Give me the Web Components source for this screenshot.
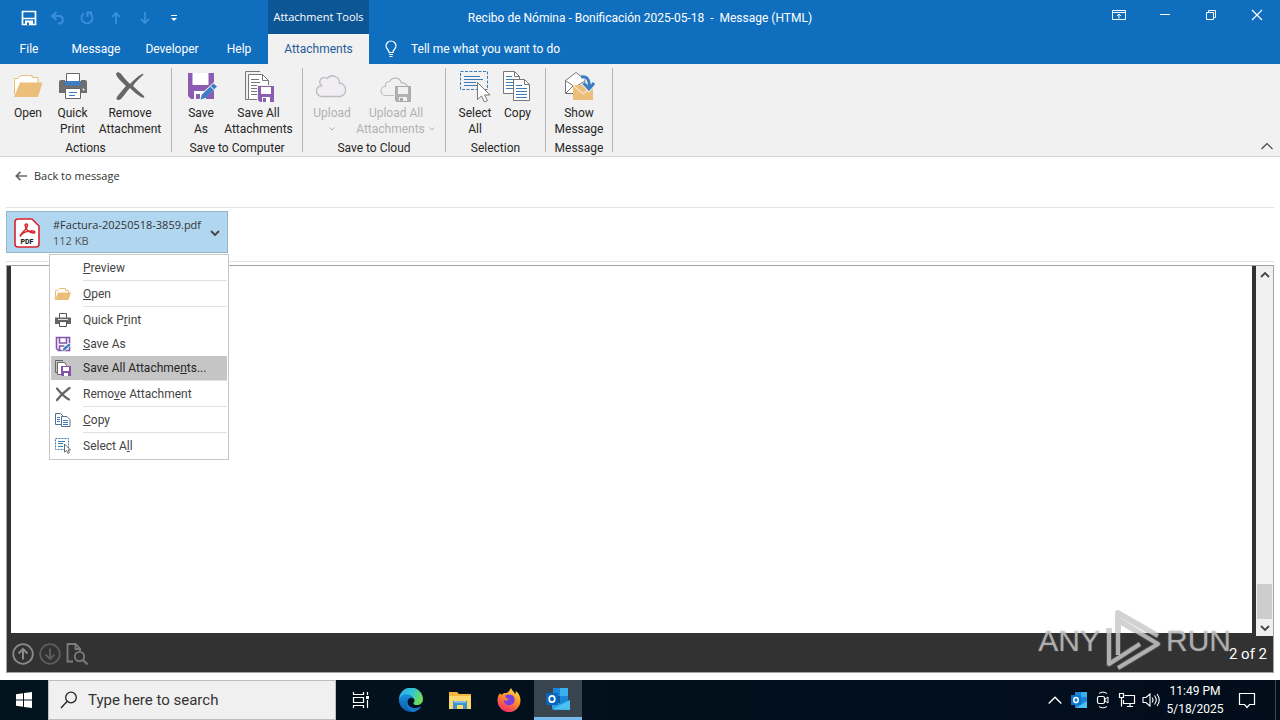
<!DOCTYPE html>
<html lang="en">
<head>
<meta charset="utf-8">
<meta name="viewport" content="width=device-width, initial-scale=1">
<title>Recibo de Nómina - Bonificación 2025-05-18 - Message (HTML)</title>
<style>
  html, body { margin: 0; height: 100%; }
  body {
    display: flex; flex-direction: column; min-height: 100vh;
    font: 12px/16px Roboto, "Noto Sans", sans-serif;
    color: #262626; background: #fff;
    --small: 11px/16px "Open Sans", "Noto Sans", sans-serif;
  }
</style>
</head>
<body>
<message-window></message-window>
<task-bar></task-bar>

<script>
const ICONS = {
  save: ['0 0 16 16', '<path d="M1.500 1.500h13v13h-13z M2 8.500h12" fill="none" stroke="#fff" stroke-width="1.700"/><path d="M4 10.500h8V15H4z" fill="#fff"/><path d="M6 12.500h2V15H6z" fill="#106ebe"/>'],
  undo: ['0 0 16 16', '<path d="M6.500 2L2 6l4.500 4M2.500 6H10a3.500 3.800 0 0 1 0 7.500H8" fill="none" stroke="#3a8fd8" stroke-width="1.800"/>'],
  redo: ['0 0 16 16', '<path d="M11 3.200A5.500 5.500 0 1 1 5 3.200M8.500 7V2.500h4.500" fill="none" stroke="#3a8fd8" stroke-width="1.800"/>'],
  up: ['0 0 16 16', '<path d="M8 14V3M4 7l4-4 4 4" fill="none" stroke="#3a8fd8" stroke-width="1.800"/>'],
  down: ['0 0 16 16', '<path d="M8 2v11M4 9l4 4 4-4" fill="none" stroke="#3a8fd8" stroke-width="1.800"/>'],
  more: ['0 0 16 16', '<path d="M5 5.500h6" stroke="#fff"/><path d="M5 8h6l-3 3z" fill="#fff"/>'],
  bulb: ['0 0 16 20', '<path d="M6 13.500c0-3-3-3.500-3-6.500a5 5 0 0 1 10 0c0 3-3 3.500-3 6.500zM6 15.500h4M6.500 17.500h3" fill="none" stroke="#fff" stroke-width="1.200"/>'],
  ribbonopts: ['0 0 14 12', '<path d="M.5 1.500h13v9H.5zM.5 3.500h13M7 9.500V5M5 7l2-2 2 2" fill="none" stroke="#fff"/>'],
  min: ['0 0 12 12', '<path d="M1 5.500h10" stroke="#fff"/>'],
  restore: ['0 0 12 12', '<path d="M1.500 3.500h7v7h-7zM3.500 3.500v-2h7v7h-2" fill="none" stroke="#fff"/>'],
  close: ['0 0 12 12', '<path d="M1 1l10 10M11 1L1 11" stroke="#fff" stroke-width="1.200"/>'],
  folder: ['0 0 32 32', '<path d="M2.500 24V8.500h3L9 5.500h11v2h6V14" fill="#fff" stroke="#e8bd78"/><path d="M2 27L8 12.500h22.500L26 27z" fill="#ebbf79"/>'],
  printer: ['0 0 32 32', '<path d="M9.500 14V3.500h13V14" fill="#fff" stroke="#666"/><path d="M4 10h4v4h16v-4h4a2 2 0 0 1 2 2v11H2V12a2 2 0 0 1 2-2z" fill="#6e6e6e"/><path d="M8 11h16v4.500H8z" fill="#3c7dc4"/><circle cx="26.500" cy="19.500" r="1" fill="#fff"/><path d="M8.500 18.500h15v10h-15z" fill="#fff" stroke="#666"/><path d="M12 22.500h8M12 25.500h6" stroke="#3c7dc4"/>'],
  cross: ['0 0 32 32', '<path d="M2 4c1-3 4-2 6 1 2 3 5 6 8 9 4-4 8-8 12-10 2-1 2 1 0 2-3 3-7 6-9 10 4 4 8 7 11 10 1 2-1 2-3 1-5-3-8-6-11-9-4 4-6 8-9 11-2 2-6 1-4-2 3-4 6-8 9-11C8 12 3 8 2 4z" fill="#666"/>'],
  saveas: ['0 0 32 32', '<path d="M3 3h26v26H6l-3-3z" fill="#8c5cb3"/><path d="M7.500 3h16v12h-16zM9 21h12v8H9z" fill="#fff"/><path d="M11 24h4v5h-4z" fill="#8c5cb3"/><path d="M14 31l2-7 13-12 4 4-13 12z" fill="#f1f1f1"/><path d="M15.500 29.500l1.500-5L28.500 13.500l3.500 3L20.500 28z" fill="#3c7dc4"/><path d="M25.500 16.500l3.500 3" stroke="#fff"/>'],
  saveall: ['0 0 32 32', '<path d="M5 29.500H2.500v-28H17" fill="none" stroke="#777"/><path d="M5.500 4.500h14l6 6V29.500h-20z" fill="#fff" stroke="#777"/><path d="M19.500 4.500v6h6M8 9.500h8M8 12.500h9M8 15.500h8M8 18.500h7M8 21.500h7M8 24.500h7" fill="none" stroke="#777"/><path d="M14 15h18v17H14z" fill="#f1f1f1"/><path d="M15 16h16v16H17l-2-2z" fill="#8c5cb3"/><path d="M18 17h10v7H18zM19 27h8v5h-8z" fill="#fff"/><path d="M20 28h3v4h-3z" fill="#8c5cb3"/>'],
  cloud: ['0 0 32 32', '<path d="M6.500 26.500a5.500 5.500 0 0 1-1-11 4 4 0 0 1 5.500-7 7 7 0 0 1 12.500 4.500 6.900 6.900 0 0 1 1 13.500z" fill="#f1eef3" stroke="#bdb9bf" stroke-width="1.300"/>'],
  cloudall: ['0 0 32 32', '<path d="M5.500 25.500a4.500 4.500 0 0 1 0-9 4 4 0 0 1 4-5 6.500 6.500 0 0 1 12 1.500 5 5 0 0 1 6 4" fill="none" stroke="#bcbcbc" stroke-width="1.200"/><path d="M5 25.500h9" stroke="#bcbcbc"/><path d="M15.500 16.500h15v15h-14l-1-1z" fill="#b2b0b3" stroke="#a9a9a9"/><path d="M18 17h10v7H18zM19 27h8v4h-8z" fill="#f1f1f1"/><path d="M20 28h3v3h-3z" fill="#a9a9a9"/>'],
  selectall: ['0 0 32 32', '<path d="M1.500 1.500h27v18h-27z" fill="none" stroke="#3d7ab8" stroke-dasharray="3 1.500"/><path d="M5 6.500h16M5 9.500h19M5 12.500h12M5 15.500h13" stroke="#3d7ab8"/><path d="M18.500 12.500v17l4-3.500 3 6 3-1.500-3-5.500h5.500z" fill="#fff" stroke="#777"/>'],
  copy: ['0 0 32 32', '<path d="M1.500 1.500h11l5 5v17h-16z" fill="#fff" stroke="#777"/><path d="M12.500 1.500v5h5" fill="none" stroke="#777"/><path d="M4 6.500h6M4 9.500h9M4 12.500h9M4 15.500h7M4 18.500h7" fill="none" stroke="#3d7ab8"/><path d="M11.500 9.500h11l5 5v16h-16z" fill="#fff" stroke="#777"/><path d="M22.500 9.500v5h5" fill="none" stroke="#777"/><path d="M14 15.500h6M14 18.500h11M14 21.500h11M14 24.500h11M14 27.500h11" stroke="#3d7ab8"/>'],
  showmsg: ['0 0 32 32', '<path d="M2.500 23.500V10.500L13 2.500l9 7v14z" fill="#fff" stroke="#777"/><path d="M2.500 10.500L12 17l10-6M3 23l7-7" fill="none" stroke="#777"/><path d="M10 15h20v15H10z" fill="#ebbf79"/><path d="M10 15l10 9 10-9" fill="none" stroke="#f8e3c2" stroke-width="1.300"/><path d="M18 7c7-1 9 4 8 11M20.500 13l5.500 6 5-6" fill="none" stroke="#f1f1f1" stroke-width="5"/><path d="M18 7c7-1 9 4 8 11M20.500 13l5.500 6 5-6" fill="none" stroke="#3c7dc4" stroke-width="3"/>'],
  chev: ['0 0 8 8', '<path d="M1.500 2.500L4 5l2.500-2.500" fill="none" stroke="currentColor"/>'],
  chevdown: ['0 0 12 12', '<path d="M2 4l4 4 4-4" fill="none" stroke="currentColor" stroke-width="1.800"/>'],
  chevup: ['0 0 12 12', '<path d="M2 8l4-4 4 4" fill="none" stroke="currentColor" stroke-width="1.800"/>'],
  thinup: ['0 0 14 12', '<path d="M1.500 9L7 3.500 12.500 9" fill="none" stroke="currentColor" stroke-width="1.200"/>'],
  back: ['0 0 12 12', '<path d="M1 6h11M5.500 1.800L1.300 6l4.200 4.200" fill="none" stroke="#666" stroke-width="1.700"/>'],
  pdf: ['0 0 26 30', '<path d="M4 1h14l7 7v18a3 3 0 0 1-3 3H4a3 3 0 0 1-3-3V4a3 3 0 0 1 3-3z" fill="#fff" stroke="#d9252c" stroke-width="1.600"/><path d="M6.500 17.500c1-3 6.500-6 7-10 0-2-2.500-2-2.300 0 .5 4 4 7 8.300 7.500 2 0 1.500-2-.5-2-4-.3-9 1-11.500 3.500-1.500 1.500-1 2-1 1z" fill="none" stroke="#d9252c" stroke-width="1.600"/><text x="13" y="26" font-family="Roboto, sans-serif" font-size="7" font-weight="800" text-anchor="middle" fill="#222">PDF</text>'],
  mfolder: ['0 0 16 16', '<path d="M.5 13V4.500h2l2-2h6v2h3V7" fill="#fff" stroke="#e8bd78"/><path d="M0 14l3-7.500h13L13.500 14z" fill="#ebbf79"/>'],
  mprinter: ['0 0 16 16', '<path d="M4.500 6V1.500h7V6" fill="#fff" stroke="#555"/><path d="M0 5.500h16V12H0z" fill="#666"/><path d="M4.500 9.500h7v5h-7z" fill="#fff" stroke="#555"/><path d="M3 7.500h10" stroke="#ddd"/>'],
  msaveas: ['0 0 16 16', '<path d="M1.500 1.500h13v13h-11l-2-2zM4.500 2v5h7V2M4.500 14v-4h5" fill="#fff" stroke="#8453ac" stroke-width="1.600"/><path d="M7 16l1-4 6-5 2 2-6 5.500z" fill="#3c7dc4" stroke="#fff" stroke-width=".7"/>'],
  msaveall: ['0 0 16 16', '<path d="M2 12.500H.5V.5H8" fill="none" stroke="#666"/><path d="M2.500 2.500h7l2 3v9h-9z" fill="#fff" stroke="#666"/><path d="M6 6h10v10H7l-1-1z" fill="#8453ac"/><path d="M8 7h6v4H8zM9 13h4v3H9z" fill="#fff"/>'],
  mcross: ['0 0 16 16', '<path d="M2 2.500c4 5 8 9 12 11M14.500 2C9 6 5 10 2 14" fill="none" stroke="#666" stroke-width="2.200" stroke-linecap="round"/>'],
  mcopy: ['0 0 16 16', '<path d="M.5 1.500h5l3 3v8h-8z" fill="#fff" stroke="#58708a"/><path d="M2 5.500h3M2 7.500h3M2 9.500h3" stroke="#3d7ab8"/><path d="M6.500 4.500h5.500l3 3v7H6.500z" fill="#fff" stroke="#58708a"/><path d="M8 8.500h5M8 10.500h5M8 12.500h5" stroke="#3d7ab8"/>'],
  mselect: ['0 0 16 16', '<path d="M.5 .5h13v11H.5z" fill="none" stroke="#3d7ab8" stroke-dasharray="2 1"/><path d="M3 3.500h7M3 5.500h5M3 8.500h5" stroke="#3d7ab8"/><path d="M9.500 6v8l2-1.500 1.500 3 1.500-1-1.500-2.500h2.500z" fill="#fff" stroke="#666"/>'],
  circleup: ['0 0 22 22', '<circle cx="11" cy="11" r="9.800" fill="none" stroke="#8a8a8a" stroke-width="1.800"/><path d="M11 16.500V6M6.500 10.500L11 6l4.500 4.500" fill="none" stroke="#8a8a8a" stroke-width="2"/>'],
  circledown: ['0 0 22 22', '<circle cx="11" cy="11" r="9.800" fill="none" stroke="#5c5c5c" stroke-width="1.800"/><path d="M11 5.500V16M6.500 11.500L11 16l4.500-4.500" fill="none" stroke="#5c5c5c" stroke-width="2"/>'],
  docsearch: ['0 0 22 22', '<path d="M7 18.500H1.500V1h8l4.500 4.500V8M9.500 1v5h5" fill="none" stroke="#7c7c7c" stroke-width="1.800"/><circle cx="13.500" cy="13.500" r="4.700" fill="none" stroke="#7c7c7c" stroke-width="1.800"/><path d="M17 17l4.500 4.500" stroke="#7c7c7c" stroke-width="2"/>'],
  windows: ['0 0 16 16', '<path d="M0 2.200L7 1.200v6.300H0zM8 1l8-1v7.500H8zM0 8.500h7v6.300L0 13.800zM8 8.500h8V16l-8-1.100z" fill="#fff"/>'],
  search: ['0 0 18 18', '<circle cx="11" cy="6.500" r="5.300" fill="none" stroke="#222" stroke-width="1.300"/><path d="M7 10.500L1 17" stroke="#222" stroke-width="1.300"/>'],
  taskview: ['0 0 18 16', '<path d="M1.500 0v2.500h10V0M1.500 16v-2.500h10V16M1.500 5.500h10v5h-10zM15.500 0v3M15.500 8v8" fill="none" stroke="#fff" stroke-width="1.200"/><path d="M14 4h3v3h-3z" fill="#fff"/>'],
  edge: ['0 0 24 24', '<defs><linearGradient id="e" x1="0" x2="1" y2=".4"><stop stop-color="#2aa3e6"/><stop offset=".55" stop-color="#31c6d8"/><stop offset="1" stop-color="#6ddc5a"/></linearGradient><linearGradient id="f" y1="0" y2="1" x2="0"><stop stop-color="#1a8fe0"/><stop offset="1" stop-color="#0c59a4"/></linearGradient></defs><path d="M0 12a12 12 0 0 1 24-1c0 4-3 6-6 6-2.500 0-4-1-3.500-2 2-2 1-6-3.500-6.500C6 8 2 9 0 12z" fill="url(#e)"/><path d="M0 12c1-4 5-6.500 9.500-5.500 3 .8 4.500 2 5 4-2.500-2-6 0-6 3.500 0 5 6 8 13.500 4.500-3 5-7.500 6-11 5.400A12 12 0 0 1 0 12z" fill="url(#f)"/><path d="M8.500 14c0 5 6 8 13.500 4.500-2 3.500-5 5-8 5.400C9 22.500 6 17 8.500 14z" fill="#1a76c9"/>'],
  explorer: ['0 0 22 19', '<path d="M0 1h8l2 2h12v15H0z" fill="#f2b83c"/><path d="M0 5h22v13H0z" fill="#fcd96f"/><path d="M4 10h14v8h-4v-4H8v4H4z" fill="#3d92d0"/><path d="M5 10h12v2H5z" fill="#7bbde6"/>'],
  firefox: ['0 0 24 24', '<defs><linearGradient id="g" x1=".8" x2=".3" y2="1"><stop stop-color="#ffe14a"/><stop offset=".45" stop-color="#ff9326"/><stop offset="1" stop-color="#f0296a"/></linearGradient></defs><path d="M3 5c0 1 1 1.500 2 1.500C7 4.500 8 5 9 5c2 0 3-2 5-5 1 3 3 3 4 6 1-1 1-2 .5-3C22 5 23.500 9 23.500 12.500a11.500 11.500 0 0 1-23 0C.5 9 1.500 7 3 5z" fill="url(#g)"/><path d="M8 8c2-2 7-2 9 1 1.500 3 .5 7-3 8-4 1-7.500-1.500-7-5 1 1 3 1 5-.5C10 11 9 10 8 8z" fill="#7a3fe0"/>'],
  outlook: ['0 0 24 22', '<path d="M7 0h15v16H7z" fill="#1a86d9"/><path d="M14 0h8v8h-8z" fill="#38b0ee"/><path d="M7 8h7v8H7z" fill="#0c5ca8"/><path d="M6 12l9 4 9-4v10H8a2 2 0 0 1-2-2z" fill="#2ba0e6"/><path d="M7 21l17-9v10z" fill="#4cc0f2"/><path d="M0 5h12v12H0z" fill="#0b65bd"/><ellipse cx="6" cy="11" rx="2.800" ry="3.200" fill="none" stroke="#fff" stroke-width="1.700"/>'],
  trayoutlook: ['0 0 16 16', '<path d="M4 0h12v16H4z" fill="#1a86d9"/><path d="M10 0h6v5h-6z" fill="#38b0ee"/><path d="M5 16l11-7v7z" fill="#4cc0f2"/><path d="M0 3h10v10H0z" fill="#0b74cf"/><ellipse cx="5" cy="8" rx="2.200" ry="2.600" fill="none" stroke="#fff" stroke-width="1.500"/>'],
  camera: ['0 0 14 18', '<path d="M3 2.500c2.500-1.800 5.500-1.800 8 0M3 15.500c2.500 1.800 5.500 1.800 8 0" fill="none" stroke="#fff"/><rect x="1.500" y="5.500" width="7" height="7" rx="1.500" fill="none" stroke="#fff" stroke-width="1.200"/><path d="M9 8l3-2v6L9 10z" fill="none" stroke="#fff"/>'],
  network: ['0 0 18 16', '<path d="M6.500 3.500h10v8h-11V8M9 14.500h6M12 12v2.500M1.500 1.500h4v4h-4zM3.500 5.500v9" fill="none" stroke="#fff" stroke-width="1.200"/>'],
  speaker: ['0 0 18 16', '<path d="M1 5.500h3L8 2v12l-4-3.500H1zM10 5.500q2 2.500 0 5M12.500 3.500q3.500 4.500 0 9M15 2q4.500 6 0 12" fill="none" stroke="#fff" stroke-width="1.100"/>'],
  notify: ['0 0 18 18', '<path d="M1.500 2.500h15v11h-5l-2.500 3-2.500-3h-5z" fill="none" stroke="#fff" stroke-width="1.200"/>'],
  play: ['0 0 56 62', '<g fill="none" stroke-linejoin="round"><path d="M4 18v36l31-20M13 45V3l40 23M13 58L53 34 13 10" stroke="#888" stroke-opacity=".35" stroke-width="6"/><path d="M4 18v36l31-20M13 45V3l40 23M13 58L53 34 13 10" stroke="#d0d0d0" stroke-opacity=".75" stroke-width="4"/></g>'],
};

const define = (name, html, extend) => {
  const tpl = document.createElement('template');
  tpl.innerHTML = html;
  customElements.define(name, class extends HTMLElement {
    constructor() {
      super();
      this.attachShadow({ mode: 'open' }).append(tpl.content.cloneNode(true));
    }
    connectedCallback() { if (extend) extend(this, this.shadowRoot); }
  });
};

define('ui-icon', `<style>
  :host { display: block; flex: none; width: var(--icon-w, 16px); height: var(--icon-h, 16px); }
  svg { display: block; width: 100%; height: 100%; }
</style>`, (el, root) => {
  const [box, art] = ICONS[el.getAttribute('name')];
  root.innerHTML += `<svg viewBox="${box}" aria-hidden="true">${art}</svg>`;
});

define('title-bar', `<style>
  :host { display: block; background: #106ebe; color: #fff; }
  .top { display: grid; grid-template-columns: 1fr auto 1fr; height: 34px; }
  .left { display: flex; }
  .qat { display: flex; align-items: center; box-sizing: border-box; width: 268px; padding-left: 14px; }
  button { font: inherit; color: inherit; background: none; border: 0; padding: 0; }
  .qat button { display: grid; place-items: center; width: 29px; height: 32px; }
  .context { width: 101px; background: #0d5695; font: var(--small); line-height: 34px; text-align: center; white-space: nowrap; }
  .title { font: inherit; line-height: 36px; margin: 0; white-space: pre; }
  .win { display: flex; justify-content: flex-end; }
  .win button { display: grid; place-items: center; width: 46px; height: 30px; --icon-w: 12px; --icon-h: 12px; }
  .win .opts { --icon-w: 14px; }
  nav { display: grid; grid-template-columns: 58px 76px 76px 58px 101px auto 1fr; height: 30px; }
  nav button { white-space: nowrap; }
  nav .active { background: #f1f1f1; color: #1e5c99; }
  .tell { display: flex; align-items: center; gap: 12px; padding-left: 14px; --icon-h: 20px; }
</style>
<div class="top">
  <div class="left">
    <div class="qat">
      <button aria-label="Save"><ui-icon name="save"></ui-icon></button>
      <button aria-label="Undo"><ui-icon name="undo"></ui-icon></button>
      <button aria-label="Redo"><ui-icon name="redo"></ui-icon></button>
      <button aria-label="Previous item"><ui-icon name="up"></ui-icon></button>
      <button aria-label="Next item"><ui-icon name="down"></ui-icon></button>
      <button aria-label="Customize toolbar"><ui-icon name="more"></ui-icon></button>
    </div>
    <div class="context">Attachment Tools</div>
  </div>
  <h1 class="title">Recibo de Nómina - Bonificación 2025-05-18  -  Message (HTML)</h1>
  <div class="win">
    <button class="opts" aria-label="Ribbon display options"><ui-icon name="ribbonopts"></ui-icon></button>
    <button aria-label="Minimize"><ui-icon name="min"></ui-icon></button>
    <button aria-label="Restore"><ui-icon name="restore"></ui-icon></button>
    <button aria-label="Close"><ui-icon name="close"></ui-icon></button>
  </div>
</div>
<nav>
  <button>File</button><button>Message</button><button>Developer</button><button>Help</button>
  <button class="active">Attachments</button>
  <button class="tell"><ui-icon name="bulb"></ui-icon>Tell me what you want to do</button>
</nav>`);

define('ribbon-button', `<style>
  :host { display: block; }
  button { display: flex; flex-direction: column; align-items: center; width: 100%; height: 72px; padding: 2px 0 3px; border: 0;
    background: none; font: inherit; color: inherit; gap: 3px; white-space: nowrap; --icon-w: 32px; --icon-h: 32px; }
  :host([disabled]) button { color: #b1b1b1; }
</style><button><span class="icon"></span><span><slot></slot></span></button>`, (el, root) => {
  root.querySelector('.icon').innerHTML = `<ui-icon name="${el.getAttribute('icon')}"></ui-icon>`;
  root.querySelector('button').disabled = el.hasAttribute('disabled');
});

define('ribbon-group', `<style>
  :host { display: flex; flex-direction: column; padding: 0 6px; border-right: 1px solid #b5b5b5; }
  .items { display: grid; grid-template-columns: var(--cols); height: 72px; }
  .label { line-height: 16px; text-align: center; white-space: nowrap; }
</style><div class="items"><slot></slot></div><div class="label"></div>`, (el, root) => {
  root.querySelector('.label').textContent = el.getAttribute('label');
});

define('ribbon-bar', `<style>
  :host { display: flex; height: 84px; padding: 4px 0; background: #f1f1f1; border-bottom: 1px solid #d2d2d2; }
  .g1 { --cols: 44px 45px 70px; }
  .g2 { --cols: 46px 69px 3px; }
  .g3 { --cols: 46px 82px 2px; }
  .g4 { --cols: 46px 39px 2px; }
  .g5 { --cols: 54px; }
  .collapse { margin-left: auto; margin-right: 6px; align-self: flex-end; padding: 0; border: 0; background: none; color: #444; --icon-w: 14px; --icon-h: 12px; }
  .chev { display: grid; place-items: center; height: 16px; --icon-w: 8px; --icon-h: 8px; }
  .inline { display: inline-grid; margin-left: 3px; height: 8px; }
</style>
<ribbon-group class="g1" label="Actions">
  <ribbon-button icon="folder">Open</ribbon-button>
  <ribbon-button icon="printer">Quick<br>Print</ribbon-button>
  <ribbon-button icon="cross">Remove<br>Attachment</ribbon-button>
</ribbon-group>
<ribbon-group class="g2" label="Save to Computer">
  <ribbon-button icon="saveas">Save<br>As</ribbon-button>
  <ribbon-button icon="saveall">Save All<br>Attachments</ribbon-button>
</ribbon-group>
<ribbon-group class="g3" label="Save to Cloud">
  <ribbon-button icon="cloud" disabled>Upload<span class="chev"><ui-icon name="chev"></ui-icon></span></ribbon-button>
  <ribbon-button icon="cloudall" disabled>Upload All<br>Attachments<span class="chev inline"><ui-icon name="chev"></ui-icon></span></ribbon-button>
</ribbon-group>
<ribbon-group class="g4" label="Selection">
  <ribbon-button icon="selectall">Select<br>All</ribbon-button>
  <ribbon-button icon="copy">Copy</ribbon-button>
</ribbon-group>
<ribbon-group class="g5" label="Message">
  <ribbon-button icon="showmsg">Show<br>Message</ribbon-button>
</ribbon-group>
<button class="collapse" aria-label="Collapse the ribbon"><ui-icon name="thinup"></ui-icon></button>`);

define('menu-item', `<style>
  :host { display: block; }
  button { display: grid; grid-template-columns: 32px 1fr; align-items: center; width: 100%; height: 24px; padding: 0;
    border: 0; background: none; font: inherit; color: #444; text-align: left; white-space: nowrap; }
  .icon { padding-left: 4px; }
  :host([selected]) button { background: #c5c5c5; color: #262626; }
  :host([divided])::after { content: ""; display: block; height: 1px; margin: 0 0 1px 32px; background: #e1e1e1; }
</style><button role="menuitem"><span class="icon"></span><span><slot></slot></span></button>`, (el, root) => {
  const icon = el.getAttribute('icon');
  if (icon) root.querySelector('.icon').innerHTML = `<ui-icon name="${icon}"></ui-icon>`;
});

define('attachment-menu', `<style>
  :host { display: block; box-sizing: border-box; width: 180px; padding: 1px; border: 1px solid #c6c6c6; background: #fff; }
</style>
<div role="menu">
<menu-item divided><u>P</u>review</menu-item>
<menu-item icon="mfolder" divided><u>O</u>pen</menu-item>
<menu-item icon="mprinter">Quick P<u>r</u>int</menu-item>
<menu-item icon="msaveas"><u>S</u>ave As</menu-item>
<menu-item icon="msaveall" selected divided>Save All Attachme<u>n</u>ts...</menu-item>
<menu-item icon="mcross" divided>Remo<u>v</u>e Attachment</menu-item>
<menu-item icon="mcopy" divided><u>C</u>opy</menu-item>
<menu-item icon="mselect">Select A<u>l</u>l</menu-item>
</div>`);

define('attachment-card', `<style>
  :host { display: block; position: relative; width: 222px; }
  .card { display: flex; align-items: center; width: 100%; height: 42px; padding: 1px 6px 0 7px; border: 1px solid #9ab4c6;
    background: #b1d6f0; font: var(--small); color: #333; text-align: left; --icon-w: 26px; --icon-h: 30px; box-sizing: border-box; }
  .text { flex: 1; min-width: 0; margin-left: 13px; white-space: nowrap; }
  .size { display: block; color: #555; }
  .arrow { --icon-w: 12px; --icon-h: 12px; color: #444; }
  attachment-menu { position: absolute; z-index: 2; top: 43px; right: -1px; }
</style>
<button class="card">
  <ui-icon name="pdf"></ui-icon>
  <span class="text">#Factura-20250518-3859.pdf<span class="size">112 KB</span></span>
  <ui-icon class="arrow" name="chevdown"></ui-icon>
</button>
<attachment-menu></attachment-menu>`);

define('pdf-viewer', `<style>
  :host { display: grid; position: relative; grid-template: 1fr 36px / 1fr 17px; background: #323232; border: 1px solid #a3a3a3; }
  .page { margin: 0 4px 3px; background: #fff; }
  .scroll { display: flex; flex-direction: column; background: #f0f0f0; color: #444; }
  .scroll button { display: grid; place-items: center; height: 17px; border: 0; padding: 0; background: none; color: inherit; --icon-w: 12px; --icon-h: 12px; }
  .track { flex: 1; display: flex; flex-direction: column; justify-content: flex-end; padding: 0 1px; }
  .thumb { height: 35px; background: #cdcdcd; }
  .tools { grid-column: 1 / -1; height: 36px; display: flex; align-items: center; gap: 5px; padding: 0 6px 0 5px; --icon-w: 22px; --icon-h: 22px; }
  .tools button { padding: 0; border: 0; background: none; }
  .count { margin-left: auto; color: #fff; font-size: 15px; line-height: 20px; }
  .mark { position: absolute; right: 42px; bottom: 0; display: flex; align-items: center; gap: 5px; height: 62px;
    font: 30px/62px "Liberation Sans", sans-serif; color: rgba(200,200,200,.8);
    text-shadow: 0 0 2px rgba(120,120,120,.6); --icon-w: 56px; --icon-h: 62px; }
</style>
<div class="page"></div>
<div class="scroll">
  <button aria-label="Scroll up"><ui-icon name="chevup"></ui-icon></button>
  <div class="track"><div class="thumb"></div></div>
  <button aria-label="Scroll down"><ui-icon name="chevdown"></ui-icon></button>
</div>
<div class="tools">
  <button aria-label="Previous page"><ui-icon name="circleup"></ui-icon></button>
  <button aria-label="Next page"><ui-icon name="circledown"></ui-icon></button>
  <button aria-label="Find in document"><ui-icon name="docsearch"></ui-icon></button>
  <span class="count">2 of 2</span>
</div>
<div class="mark"><span>ANY</span><ui-icon name="play"></ui-icon><span>RUN</span></div>`);

define('message-window', `<style>
  :host { flex: 1; display: flex; flex-direction: column; }
  .back { display: flex; align-items: center; height: 38px; margin: 0 6px; padding: 0 0 12px 9px; border-bottom: 1px solid #e3e3e3; --icon-w: 12px; --icon-h: 12px; }
  .back a { display: flex; align-items: center; gap: 7px; font: var(--small); color: #333; text-decoration: none; }
  .files { margin: 0 6px; padding: 3px 0 8px; border-bottom: 1px solid #e3e3e3; }
  pdf-viewer { flex: 1; margin: 3px 6px 7px; }
</style>
<title-bar></title-bar>
<ribbon-bar></ribbon-bar>
<div class="back"><a href="#"><ui-icon name="back"></ui-icon>Back to message</a></div>
<div class="files"><attachment-card></attachment-card></div>
<pdf-viewer></pdf-viewer>`);

define('task-bar', `<style>
  :host { display: flex; height: 40px; background: linear-gradient(90deg, #02131d, #020d1c); color: #fff; }
  button { display: grid; place-items: center; width: 48px; height: 40px; padding: 0; border: 0; background: none; font: inherit; color: inherit; }
  label { display: flex; align-items: center; gap: 10px; box-sizing: border-box; width: 288px; padding-left: 11px;
    background: #f0f0f0; border: 1px solid #bdbdbd; --icon-w: 18px; --icon-h: 18px; }
  input { flex: 1; min-width: 0; border: 0; padding: 0; outline: 0; background: none; font: inherit; font-size: 15px; line-height: 20px; }
  input::placeholder { color: #333; opacity: 1; }
  .apps { display: flex; gap: 1px; --icon-w: 24px; --icon-h: 24px; }
  .apps .view { width: 50px; --icon-w: 18px; --icon-h: 16px; }
  .apps .open { background: #38444e; border-bottom: 3px solid #76b9ed; --icon-h: 22px; }
  .apps .files { --icon-w: 22px; --icon-h: 19px; }
  .tray { display: flex; align-items: center; margin-left: auto; padding-right: 8px; border-right: 1px solid #3b4650; margin-right: 4px; }
  .tray button { width: 24px; }
  .tray .wide { --icon-w: 18px; }
  .tray .cam { --icon-w: 14px; --icon-h: 18px; }
  .tray .clock { width: 64px; line-height: 18px; align-content: center; }
  .tray .note { width: 40px; --icon-w: 18px; --icon-h: 18px; }
</style>
<button aria-label="Start"><ui-icon name="windows"></ui-icon></button>
<label><ui-icon name="search"></ui-icon><input type="text" placeholder="Type here to search" aria-label="Type here to search"></label>
<div class="apps">
  <button class="view" aria-label="Task View"><ui-icon name="taskview"></ui-icon></button>
  <button aria-label="Microsoft Edge"><ui-icon name="edge"></ui-icon></button>
  <button class="files" aria-label="File Explorer"><ui-icon name="explorer"></ui-icon></button>
  <button aria-label="Firefox"><ui-icon name="firefox"></ui-icon></button>
  <button class="open" aria-label="Outlook"><ui-icon name="outlook"></ui-icon></button>
</div>
<div class="tray">
  <button aria-label="Show hidden icons"><ui-icon name="thinup"></ui-icon></button>
  <button aria-label="Outlook"><ui-icon name="trayoutlook"></ui-icon></button>
  <button class="cam" aria-label="Meet Now"><ui-icon name="camera"></ui-icon></button>
  <button class="wide" aria-label="Network"><ui-icon name="network"></ui-icon></button>
  <button class="wide" aria-label="Volume"><ui-icon name="speaker"></ui-icon></button>
  <button class="clock"><span>11:49 PM</span><span>5/18/2025</span></button>
  <button class="note" aria-label="Notifications"><ui-icon name="notify"></ui-icon></button>
</div>`);
</script>
</body>
</html>
